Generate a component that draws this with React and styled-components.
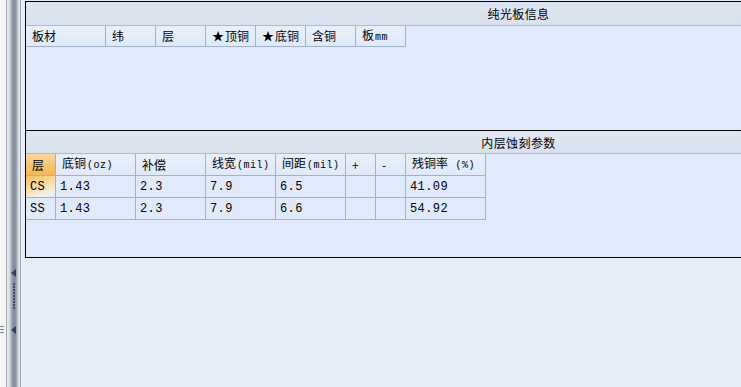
import React from 'react';
import styled, { createGlobalStyle } from 'styled-components';

const GlobalStyle = createGlobalStyle`
  html, body {
    margin: 0;
    padding: 0;
    background: #e4ecf8;
    overflow: hidden;
  }
  body {
    font-family: "Liberation Mono", "Noto Sans CJK SC", monospace;
    font-size: 12px;
    color: #000;
  }
`;

const Screen = styled.div`
  display: flex;
  width: 741px;
  height: 387px;
  overflow: hidden;
  background: #e4ecf8;
`;

const SideStrip = styled.div`
  position: relative;
  flex: 0 0 25px;
  height: 100%;
  background: linear-gradient(
    to right,
    #f6f6f6 0px, #f2f2f2 6px,
    #a9adb3 6px, #a9adb3 7px,
    #e9ebee 7px, #d4d8de 10px,
    #a7b0bc 11px, #7f8a99 14px, #8e98a6 16px, #c5cbd3 18px,
    #e4e7eb 19px, #e4e7eb 20px,
    #9a9fa6 20px, #9a9fa6 21px,
    #eef2f8 21px, #e4ecf8 25px
  );
`;

const Grip = styled.svg`
  position: absolute;
  left: 0;
  top: 268px;
`;

const Main = styled.div`
  flex: 0 0 986px;
  padding-top: 1px;
  display: flex;
  flex-direction: column;
`;

const Panel = styled.section`
  border-left: 1px solid #000;
  border-top: 1px solid #000;
  border-bottom: ${p => (p.$closed ? '1px solid #000' : 'none')};
  height: ${p => p.$height}px;
  background: #e0eafa;
  display: flex;
  flex-direction: column;
`;

const PanelTitle = styled.div`
  height: ${p => p.$height}px;
  flex: 0 0 auto;
  display: flex;
  align-items: center;
  justify-content: center;
  background: linear-gradient(#dfe6f1, #d9e1ee);
  border-bottom: 1px solid #a9bdd6;
  font-family: "Noto Sans CJK SC", sans-serif;
  font-size: 12px;
  letter-spacing: 0.4px;
`;

const Grid = styled.div`
  display: grid;
  grid-template-columns: ${p => p.$cols};
  align-self: flex-start;
`;

const HeadCell = styled.div`
  height: ${p => p.$h}px;
  box-sizing: border-box;
  display: flex;
  align-items: center;
  padding-left: 6px;
  border-right: 1px solid #9fb2ca;
  border-bottom: 1px solid #9fb2ca;
  background: ${p =>
    p.$active
      ? 'linear-gradient(#fbd89c, #f6c36e 60%, #f3b65a)'
      : 'linear-gradient(#e8f0fb, #dfe9f8)'};
  font-family: "Noto Sans CJK SC", sans-serif;
  font-size: 12px;
  white-space: nowrap;
`;

const Label = styled.span`
  line-height: 14px;
`;

const Cell = styled.div`
  height: 22px;
  box-sizing: border-box;
  display: flex;
  align-items: center;
  padding-left: 4px;
  border-right: 1px solid #9fb2ca;
  border-bottom: 1px solid #9fb2ca;
  background: ${p =>
    p.$selected
      ? 'linear-gradient(160deg, #f6bd5d 0%, #fbdba6 45%, #f2f0ea 80%, #e6eefa 100%)'
      : '#e0eafa'};
  font-family: "Liberation Mono", "Noto Sans CJK SC", monospace;
  font-size: 12px;
  letter-spacing: 0.4px;
`;

const Unit = styled.span`
  font-family: "Liberation Mono", monospace;
  font-size: 10px;
  letter-spacing: 0.5px;
  margin-left: 1px;
`;

const Star = styled.span`
  font-size: 12px;
  margin-right: 1px;
`;

const Bottom = styled.div`
  flex: 1;
  background: #e4ecf8;
`;

const boardCols = '80px 50px 50px 50px 50px 50px 50px';
const boardHeads = [
  ['板材'],
  ['纬'],
  ['层'],
  ['顶铜', true],
  ['底铜', true],
  ['含铜'],
  ['板', false, 'mm'],
];

const etchCols = '30px 80px 70px 70px 70px 30px 30px 80px';
const etchHeads = [
  ['层'],
  ['底铜', '(oz)'],
  ['补偿'],
  ['线宽', '(mil)'],
  ['间距', '(mil)'],
  ['+'],
  ['-'],
  ['残铜率', ' (%)'],
];
const etchRows = [
  ['CS', '1.43', '2.3', '7.9', '6.5', '', '', '41.09'],
  ['SS', '1.43', '2.3', '7.9', '6.6', '', '', '54.92'],
];

const App = () => (
  <>
    <GlobalStyle />
    <Screen>
      <SideStrip>
        <Grip width="25" height="70" viewBox="0 0 25 70">
          <polygon points="16,1 16,9 11,5" fill="#2e3f66" />
          {Array.from({ length: 9 }).map((_, i) => (
            <rect key={i} x="13" y={15 + i * 3} width="2" height="2" fill="#3b4c72" />
          ))}
          <polygon points="16,58 16,66 11,62" fill="#2e3f66" />
          <rect x="0" y="58" width="4" height="1" fill="#7d8594" />
          <rect x="0" y="61" width="4" height="1" fill="#7d8594" />
          <rect x="0" y="64" width="4" height="1" fill="#7d8594" />
        </Grip>
      </SideStrip>
      <Main>
        <Panel $height={128}>
          <PanelTitle $height={23}>纯光板信息</PanelTitle>
          <Grid $cols={boardCols}>
            {boardHeads.map(([label, star, unit]) => (
              <HeadCell key={label} $h={21}>
                <Label>
                  {star && <Star>★</Star>}
                  {label}
                  {unit && <Unit>{unit}</Unit>}
                </Label>
              </HeadCell>
            ))}
          </Grid>
        </Panel>
        <Panel $height={126} $closed>
          <PanelTitle $height={22}>内层蚀刻参数</PanelTitle>
          <Grid $cols={etchCols}>
            {etchHeads.map(([label, unit], i) => (
              <HeadCell key={label} $h={22} $active={i === 0}>
                <Label>
                  {label}
                  {unit && <Unit>{unit}</Unit>}
                </Label>
              </HeadCell>
            ))}
            {etchRows.map((row, r) =>
              row.map((v, c) => (
                <Cell key={`${r}-${c}`} $selected={r === 0 && c === 0}>
                  {v}
                </Cell>
              ))
            )}
          </Grid>
        </Panel>
        <Bottom />
      </Main>
    </Screen>
  </>
);

export default App;
